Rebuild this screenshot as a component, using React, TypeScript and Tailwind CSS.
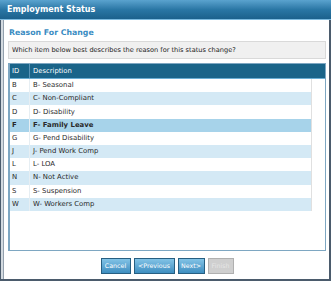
import React from "react";

const rows = [
  { id: "B", desc: "B- Seasonal" },
  { id: "C", desc: "C- Non-Compliant" },
  { id: "D", desc: "D- Disability" },
  { id: "F", desc: "F- Family Leave" },
  { id: "G", desc: "G- Pend Disability" },
  { id: "J", desc: "J- Pend Work Comp" },
  { id: "L", desc: "L- LOA" },
  { id: "N", desc: "N- Not Active" },
  { id: "S", desc: "S- Suspension" },
  { id: "W", desc: "W- Workers Comp" },
];

const selectedId = "F";

const buttons = [
  { label: "Cancel", w: "w-[30px]" },
  { label: "<Previous", w: "w-[41px]" },
  { label: "Next>", w: "w-[27px]" },
];

const App: React.FC = () => {
  return (
    <div className="w-[331px] h-[281px] bg-white font-['DejaVu_Sans',sans-serif] flex flex-col overflow-hidden">
      {/* TITLE BAR */}
      <div className="h-[20px] shrink-0 bg-gradient-to-b from-[#5aa3cf] via-[#2a77a5] to-[#1c618c] border-b border-[#7dbbe0] flex items-center pl-[7px]">
        <span className="text-white font-bold text-[8px] leading-none">Employment Status</span>
      </div>

      {/* FRAME */}
      <div className="flex-1 flex border-l border-r-2 border-b-2 border-[#4b5b6c]">
        <div className="w-[3px] bg-[#d3dae0] border-r border-[#93a0ad]" />
        <div className="flex-1 flex flex-col pl-[4px] pr-[3px]">
          {/* HEADING */}
          <div className="h-[21px] flex items-end pb-[4px] pl-[1px]">
            <span className="text-[#3a8cc2] font-bold text-[7.8px] leading-none">Reason For Change</span>
          </div>

          <div className="h-[18px] bg-[#f0f0f0] border border-[#d9d9d9] flex items-center pl-[3px]">
            <span className="text-[#222] text-[6.6px] leading-none">
              Which item below best describes the reason for this status change?
            </span>
          </div>

          {/* LIST */}
          <div className="mt-[4px] h-[188px] border border-[#7ea7c2] border-l-2 flex flex-col">
            <div className="h-[15px] bg-[#1a6489] border-b border-[#6aaed4] flex items-center text-white text-[6.8px] leading-none">
              <div className="w-[20px] pl-[2px] border-r border-[#5b95b8] h-full flex items-center">ID</div>
              <div className="pl-[3px]">Description</div>
            </div>
            <div className="flex">
              <div className="w-[302px] border-r border-[#e0e0e0]">
                {rows.map((r, i) => {
                  const selected = r.id === selectedId;
                  const bg = selected ? "bg-[#a7d3ea]" : i % 2 === 1 ? "bg-[#d4e9f5]" : "bg-white";
                  return (
                    <div
                      key={r.id}
                      className={`h-[13.2px] flex items-center text-[6.9px] leading-none text-[#2a2a2a] ${bg} ${selected ? "font-bold" : ""}`}
                    >
                      <div className="w-[20px] pl-[2px] border-r border-[#e6eef3] h-full flex items-center">{r.id}</div>
                      <div className="pl-[3px]">{r.desc}</div>
                    </div>
                  );
                })}
              </div>
            </div>
          </div>

          {/* BUTTONS */}
          <div className="flex-1 flex justify-center items-start pt-[7px] gap-[3px]">
            {buttons.map((b) => (
              <button
                key={b.label}
                className={`h-[16px] ${b.w} bg-gradient-to-b from-[#82c3e6] to-[#3d8ec0] border border-[#275f82] text-white text-[6.3px] leading-none`}
              >
                {b.label}
              </button>
            ))}
            <button
              disabled
              className="h-[16px] w-[26px] bg-[#cfcfcf] border border-[#b0b0b0] text-[#e6e6e6] text-[6.3px] leading-none"
            >
              Finish
            </button>
          </div>
        </div>
      </div>
    </div>
  );
};

export default App;
